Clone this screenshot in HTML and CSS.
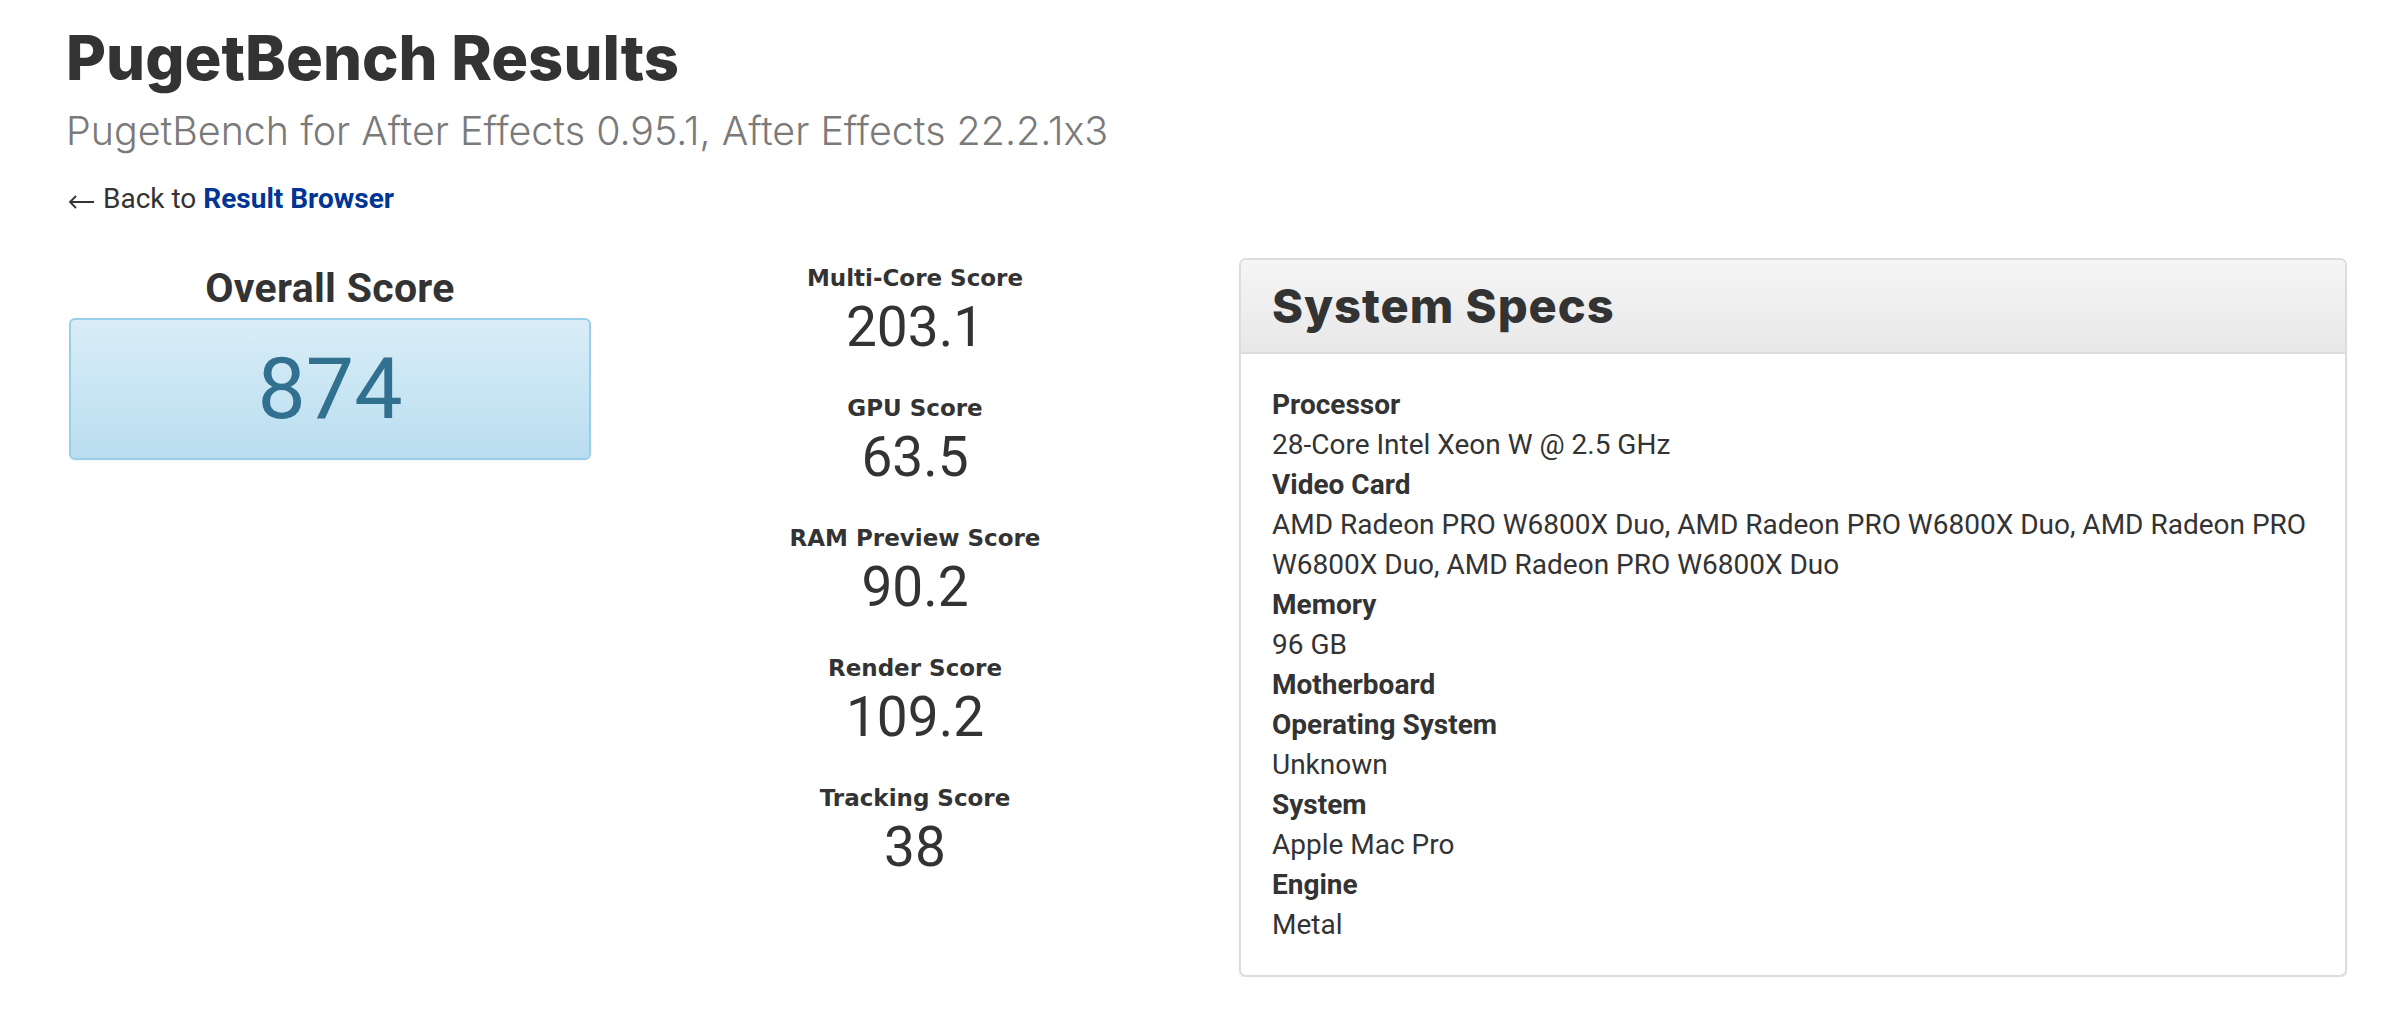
FILE: index.html
```html
<!DOCTYPE html>
<html lang="en">
<head>
<meta charset="utf-8">
<title>PugetBench Results</title>
<link rel="stylesheet" href="styles.css">
</head>
<body>
<div class="page">
  <h1 class="title">PugetBench Results</h1>
  <p class="subtitle">PugetBench for After Effects 0.95.1, After Effects 22.2.1x3</p>
  <p class="back"><svg class="back-arrow" width="27" height="14" viewBox="0 0 27 14" aria-hidden="true"><path d="M26 7H2M8 1L2 7l6 6" fill="none" stroke="#333" stroke-width="1.8"/></svg>Back to <a class="back-link" href="#">Result Browser</a></p>

  <div class="row">
    <div class="overall">
      <div class="overall-label">Overall Score</div>
      <div class="overall-box">874</div>
    </div>

    <div class="scores">
      <div class="score">
        <div class="score-label">Multi-Core Score</div>
        <div class="score-value">203.1</div>
      </div>
      <div class="score">
        <div class="score-label">GPU Score</div>
        <div class="score-value">63.5</div>
      </div>
      <div class="score">
        <div class="score-label">RAM Preview Score</div>
        <div class="score-value">90.2</div>
      </div>
      <div class="score">
        <div class="score-label">Render Score</div>
        <div class="score-value">109.2</div>
      </div>
      <div class="score">
        <div class="score-label">Tracking Score</div>
        <div class="score-value">38</div>
      </div>
    </div>

    <div class="panel">
      <div class="panel-heading">System Specs</div>
      <div class="panel-body">
        <div class="spec-label">Processor</div>
        <div class="spec-value">28-Core Intel Xeon W @ 2.5 GHz</div>
        <div class="spec-label">Video Card</div>
        <div class="spec-value">AMD Radeon PRO W6800X Duo, AMD Radeon PRO W6800X Duo, AMD Radeon PRO W6800X Duo, AMD Radeon PRO W6800X Duo</div>
        <div class="spec-label">Memory</div>
        <div class="spec-value">96 GB</div>
        <div class="spec-label">Motherboard</div>
        <div class="spec-label">Operating System</div>
        <div class="spec-value">Unknown</div>
        <div class="spec-label">System</div>
        <div class="spec-value">Apple Mac Pro</div>
        <div class="spec-label">Engine</div>
        <div class="spec-value">Metal</div>
      </div>
    </div>
  </div>
</div>
</body>
</html>
```

FILE: styles.css
```css
html, body {
  margin: 0;
  padding: 0;
  background: #ffffff;
}

body {
  font-family: Roboto, "Liberation Sans", sans-serif;
  color: #333333;
}

.page {
  padding: 22px 0 0 66px;
}

.title {
  margin: 0;
  font-family: Inter, "DejaVu Sans", sans-serif;
  font-weight: 800;
  font-size: 61.5px;
  line-height: 72px;
  color: #333333;
}

.subtitle {
  margin: 12px 0 0 0;
  font-family: Inter, "DejaVu Sans", sans-serif;
  font-feature-settings: "calt" 0;
  font-weight: 300;
  font-size: 39.4px;
  line-height: 50px;
  color: #7a7a7a;
}

.back {
  margin: 25px 0 0 0;
  font-size: 28px;
  line-height: 36px;
  color: #333333;
}

.back-arrow {
  display: inline-block;
  vertical-align: -1px;
  margin: 0 8px 0 2px;
}

.back-link {
  color: #003594;
  font-weight: 700;
  text-decoration: none;
}

.row {
  margin-top: 41px;
  display: grid;
  grid-template-columns: 525px 648px 1108px;
  align-items: start;
}

.overall {
  margin-left: 3px;
  padding-top: 6px;
  text-align: center;
}

.overall-label {
  font-weight: 700;
  font-size: 41px;
  line-height: 48px;
  letter-spacing: 0.3px;
  margin-bottom: 6px;
}

.overall-box {
  box-sizing: border-box;
  height: 142px;
  border: 2px solid #9acfea;
  border-radius: 6px;
  background: linear-gradient(to bottom, #d9edf7 0%, #b9def0 100%);
  color: #31708f;
  font-size: 86px;
  line-height: 86px;
  display: flex;
  align-items: center;
  justify-content: center;
  box-shadow: 0 1px 2px rgba(0, 0, 0, 0.05);
}

.scores {
  padding-top: 6px;
  text-align: center;
}

.score {
  margin-bottom: 32px;
}

.score-label {
  font-family: "DejaVu Sans", Roboto, sans-serif;
  font-weight: 700;
  font-size: 23px;
  line-height: 28px;
}

.score-value {
  font-size: 55px;
  line-height: 70px;
}

.panel {
  border: 2px solid #dddddd;
  border-radius: 7px;
  background: #ffffff;
  box-shadow: 0 2px 2px rgba(0, 0, 0, 0.06);
  overflow: hidden;
}

.panel-heading {
  padding: 19px 31px 20px;
  font-family: Inter, "DejaVu Sans", sans-serif;
  font-weight: 800;
  font-size: 47px;
  line-height: 53px;
  letter-spacing: 1px;
  color: #333333;
  background: linear-gradient(to bottom, #f5f5f5 0%, #e8e8e8 100%);
  border-bottom: 2px solid #dddddd;
}

.panel-body {
  padding: 31px 31px 30px;
  font-size: 28px;
  line-height: 40px;
}

.spec-label {
  font-weight: 700;
}
```
